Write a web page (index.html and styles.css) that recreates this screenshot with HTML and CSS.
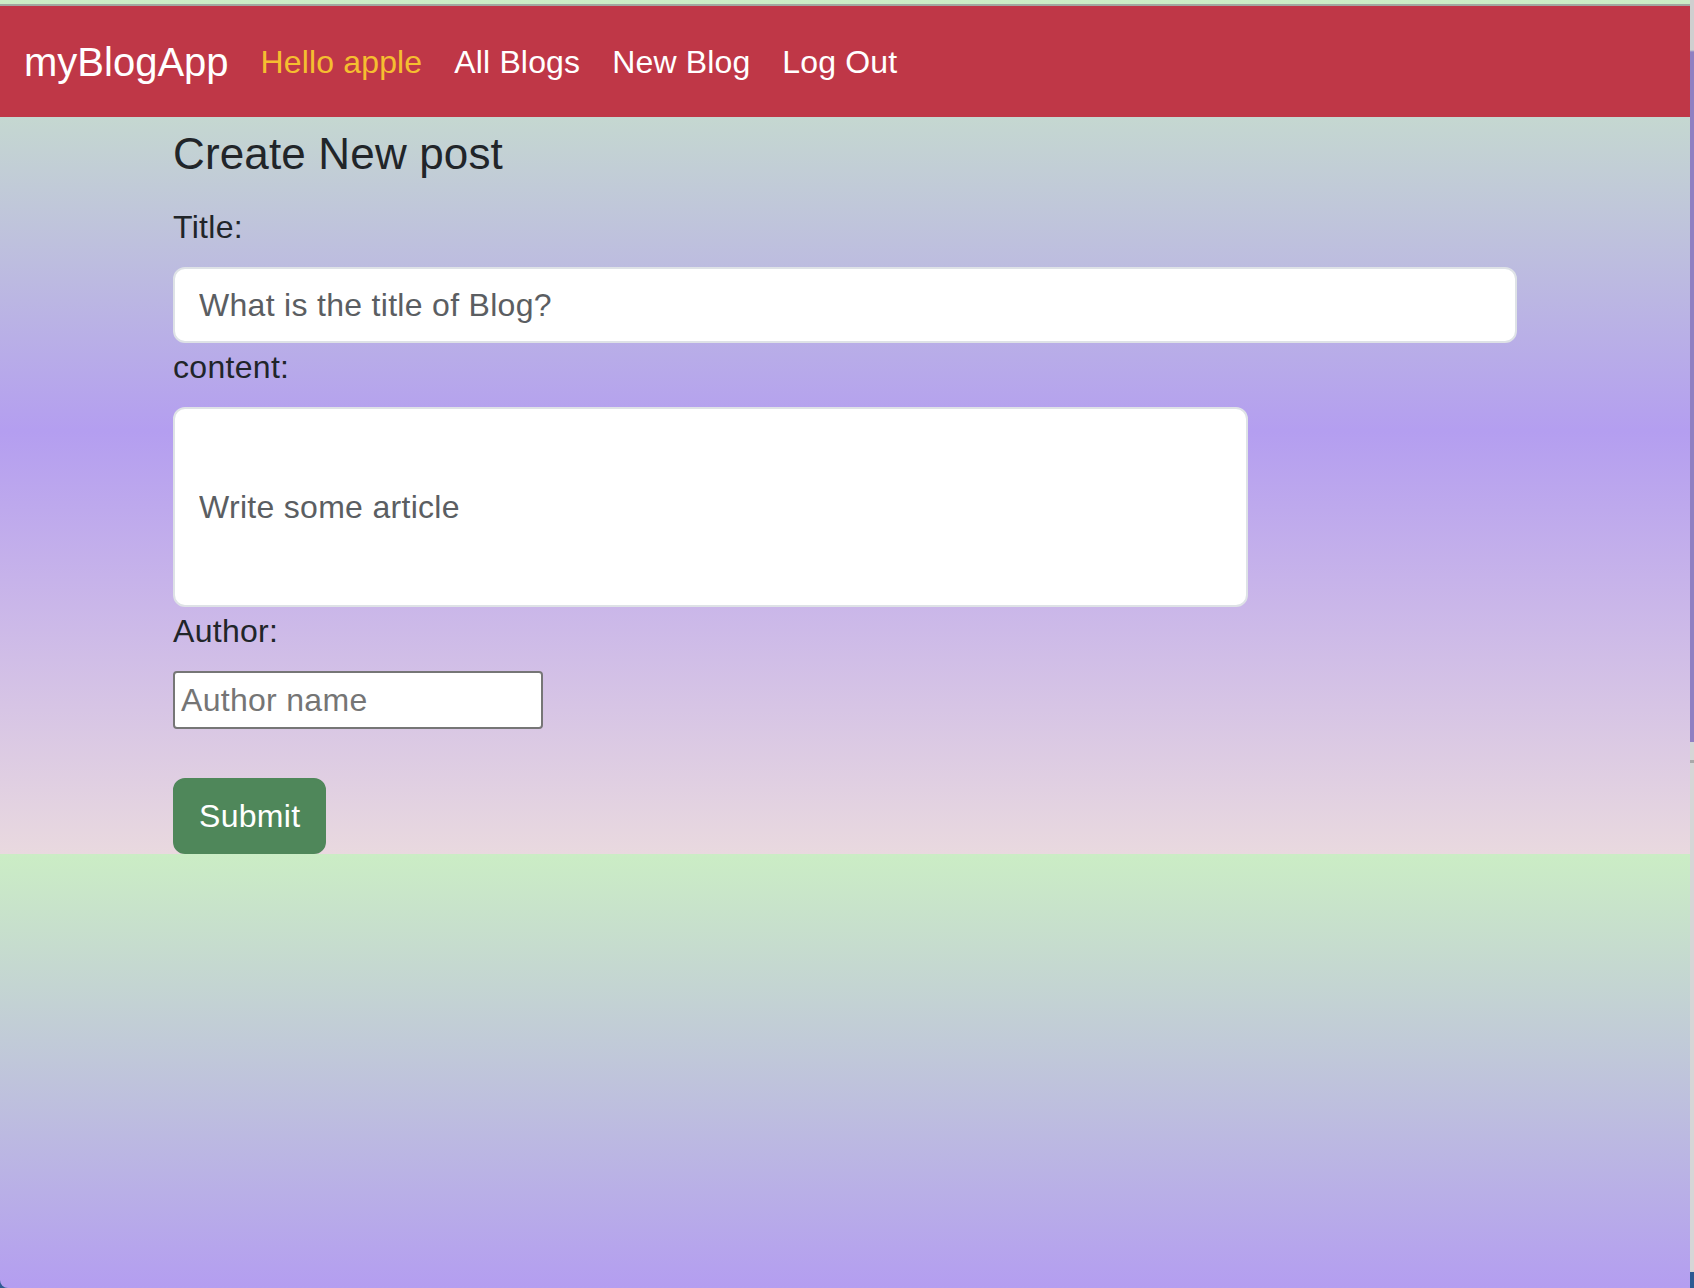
FILE: index.html
```html
<!DOCTYPE html>
<html lang="en">
<head>
<meta charset="utf-8">
<title>myBlogApp</title>
<link rel="stylesheet" href="styles.css">
</head>
<body>
<div class="page">
  <nav class="navbar">
    <a class="brand" href="#">myBlogApp</a>
    <span class="nav-text">Hello apple</span>
    <a class="nav-link" href="#">All Blogs</a>
    <a class="nav-link" href="#">New Blog</a>
    <a class="nav-link" href="#">Log Out</a>
  </nav>
  <main class="container">
    <h3 class="page-title">Create New post</h3>
    <form class="post-form">
      <label class="form-label">Title:</label>
      <input class="form-control" type="text" placeholder="What is the title of Blog?">
      <label class="form-label">content:</label>
      <input class="form-control content-input" type="text" placeholder="Write some article">
      <label class="form-label">Author:</label>
      <input class="author-input" type="text" placeholder="Author name">
      <button class="btn-submit" type="button">Submit</button>
    </form>
  </main>
</div>
<div class="edge"></div>
</body>
</html>
```
FILE: styles.css
```css
* { box-sizing: border-box; }

html, body {
  margin: 0;
  padding: 0;
}

body {
  display: flex;
  width: 1694px;
  min-height: 1288px;
  background: #2f5b93;
  font-family: "Liberation Sans", Arial, sans-serif;
  color: #212529;
  overflow: hidden;
}

.page {
  flex: 0 0 1690px;
  min-height: 1288px;
  padding-top: 4px;
  background-image: linear-gradient(to bottom, #cbedc5 0%, #b49ef0 50.5%, #e9d9df 100%);
  background-size: 100% 854px;
  background-repeat: repeat-y;
  border-bottom-left-radius: 8px;
}

.edge {
  flex: 0 0 4px;
  background: linear-gradient(to bottom,
    #cfcfcf 0, #cfcfcf 50px,
    #8f80c2 52px, #8f80c2 742px,
    #d6d6d6 742px, #d6d6d6 760px,
    #a9a9a9 760px, #a9a9a9 763px,
    #d6d6d6 763px, #d6d6d6 1272px,
    #2f5b93 1272px);
}

/* Navbar */
.navbar {
  display: flex;
  align-items: center;
  gap: 32px;
  height: 113px;
  padding: 0 24px;
  border-top: 2px solid #a2a7a0;
  background: #bf3747;
}

.navbar a { text-decoration: none; }

.brand {
  font-size: 40px;
  line-height: 60px;
  color: #ffffff;
}

.nav-text {
  font-size: 32px;
  line-height: 48px;
  letter-spacing: 0.15px;
  color: #f5be30;
}

.nav-link {
  font-size: 32px;
  line-height: 48px;
  letter-spacing: 0.15px;
  color: #ffffff;
}

/* Content */
.container {
  width: 1344px;
  margin: 0 auto;
}

.page-title {
  margin: 10px 0 23px;
  font-size: 44px;
  font-weight: 400;
  line-height: 53px;
  letter-spacing: 0.15px;
  color: #212529;
}

.post-form {
  display: flex;
  flex-direction: column;
  align-items: flex-start;
}

.form-label {
  font-size: 32px;
  line-height: 48px;
  letter-spacing: 0.3px;
  margin-bottom: 16px;
  color: #212529;
}

.form-control {
  display: block;
  width: 100%;
  height: 76px;
  padding: 12px 24px;
  font-family: inherit;
  font-size: 32px;
  line-height: 48px;
  letter-spacing: 0.3px;
  color: #212529;
  background: #ffffff;
  border: 2px solid #dee2e6;
  border-radius: 12px;
  outline: none;
}

.form-control::placeholder { color: #5b5e62; opacity: 1; }

.content-input {
  width: 80%;
  height: 200px;
}

.author-input {
  width: 370px;
  height: 58px;
  padding: 2px 6px;
  font-family: inherit;
  font-size: 32px;
  letter-spacing: 0.3px;
  color: #212529;
  background: #ffffff;
  border: 2px solid #767676;
  border-radius: 4px;
  outline: none;
}

.author-input::placeholder { color: #757575; opacity: 1; }

.btn-submit {
  margin-top: 49px;
  height: 76px;
  padding: 12px 24px;
  font-family: inherit;
  font-size: 32px;
  line-height: 48px;
  letter-spacing: 0.3px;
  color: #ffffff;
  background: #4f875a;
  border: 2px solid #4f875a;
  border-radius: 12px;
  cursor: pointer;
}
```
